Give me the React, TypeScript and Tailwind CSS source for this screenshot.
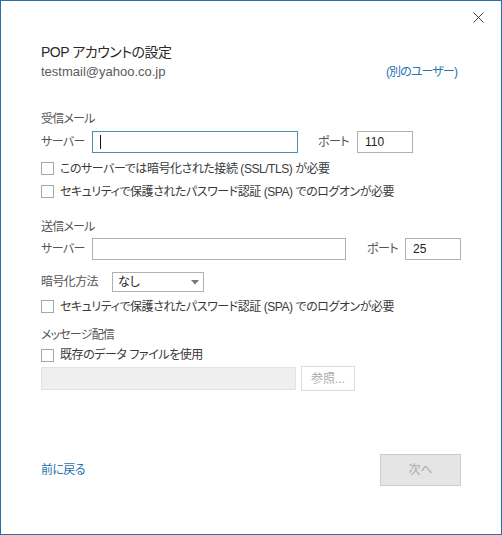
import React from 'react';

const font = "font-['Liberation_Sans','Noto_Sans_CJK_JP',sans-serif] [font-feature-settings:'palt']";

const Checkbox = ({ label, className = '' }: { label: string; className?: string }) => (
    <label className={`flex items-center gap-[6px] text-[12px] tracking-[-0.45px] text-[#3a3a3a] ${className}`}>
        <span className="w-[13px] h-[13px] border border-[#a8a8a8] bg-white shrink-0" />
        <span>{label}</span>
    </label>
);

export default function App() {
    return (
        <div className={`w-[502px] h-[535px] bg-white border border-[#2b6fa7] flex flex-col ${font}`}>
            <div className="flex justify-end pt-[10px] pr-[17px] h-[41px]">
                <button className="w-[12px] h-[12px] flex items-center justify-center text-[#444]">
                    <svg width="11" height="11" viewBox="0 0 11 11" stroke="currentColor" strokeWidth="1">
                        <path d="M0.5 0.5 L10.5 10.5 M10.5 0.5 L0.5 10.5" />
                    </svg>
                </button>
            </div>

            <div className="pl-[40px] pr-[40px] flex flex-col">
                <h1 className="text-[14px] tracking-[-0.5px] leading-[20px] h-[20px] text-[#2a2a2a] font-normal">POP アカウントの設定</h1>
                <div className="flex justify-between items-center h-[20px] pr-[4px]">
                    <span className="text-[13px] text-[#5a5a5a]">testmail@yahoo.co.jp</span>
                    <a className="text-[12px] tracking-[-0.9px] text-[#2474b0]">(別のユーザー)</a>
                </div>

                <div className="mt-[27px] text-[12px] tracking-[-0.8px] leading-[20px] h-[20px] text-[#555]">受信メール</div>
                <div className="mt-[2px] flex items-center text-[12px] tracking-[-0.6px] text-[#555]">
                    <span className="w-[51px]">サーバー</span>
                    <div className="w-[206px] h-[22px] border border-[#4a8ea8] bg-white flex items-center pl-[7px]">
                        <span className="w-[1px] h-[14px] bg-[#111]" />
                    </div>
                    <span className="ml-[20px] w-[39px]">ポート</span>
                    <div className="w-[56px] h-[22px] border border-[#b0b0b0] bg-white flex items-center pl-[7px] text-[12px] tracking-normal text-[#222]">110</div>
                </div>
                <Checkbox className="mt-[4px] h-[23px]" label="このサーバーでは暗号化された接続 (SSL/TLS) が必要" />
                <Checkbox className="h-[23px]" label="セキュリティで保護されたパスワード認証 (SPA) でのログオンが必要" />

                <div className="mt-[14px] text-[12px] tracking-[-0.8px] leading-[20px] h-[20px] text-[#555]">送信メール</div>
                <div className="mt-[1px] flex items-center text-[12px] tracking-[-0.6px] text-[#555]">
                    <span className="w-[51px]">サーバー</span>
                    <div className="w-[254px] h-[22px] border border-[#b0b0b0] bg-white" />
                    <span className="ml-[21px] w-[38px]">ポート</span>
                    <div className="w-[56px] h-[22px] border border-[#b0b0b0] bg-white flex items-center pl-[7px] text-[12px] tracking-normal text-[#222]">25</div>
                </div>
                <div className="mt-[12px] flex items-center text-[12px] text-[#555]">
                    <span className="w-[71px] tracking-[-0.6px]">暗号化方法</span>
                    <div className="w-[92px] h-[20px] border border-[#b0b0b0] bg-white flex items-center justify-between pl-[5px] pr-[4px] text-[#222]">
                        <span>なし</span>
                        <svg width="8" height="5" viewBox="0 0 8 5"><path d="M0 0 L8 0 L4 4.5 Z" fill="#777" /></svg>
                    </div>
                </div>
                <Checkbox className="mt-[3px] h-[23px]" label="セキュリティで保護されたパスワード認証 (SPA) でのログオンが必要" />

                <div className="mt-[7px] text-[12px] tracking-[-0.8px] leading-[20px] h-[20px] text-[#555]">メッセージ配信</div>
                <Checkbox className="h-[20px]" label="既存のデータ ファイルを使用" />
                <div className="mt-[1px] flex items-center gap-[5px]">
                    <div className="w-[255px] h-[23px] bg-[#efefef] border border-[#e2e2e2]" />
                    <button className="w-[54px] h-[25px] border border-[#dcdcdc] bg-white text-[12px] text-[#ababab]">参照...</button>
                </div>

                <div className="mt-[63px] flex items-center justify-between">
                    <a className="text-[12px] tracking-[-0.6px] text-[#2474b0]">前に戻る</a>
                    <button className="w-[81px] h-[32px] bg-[#e5e5e5] border border-[#cccccc] text-[12px] text-[#ababab]">次へ</button>
                </div>
            </div>
        </div>
    );
}
